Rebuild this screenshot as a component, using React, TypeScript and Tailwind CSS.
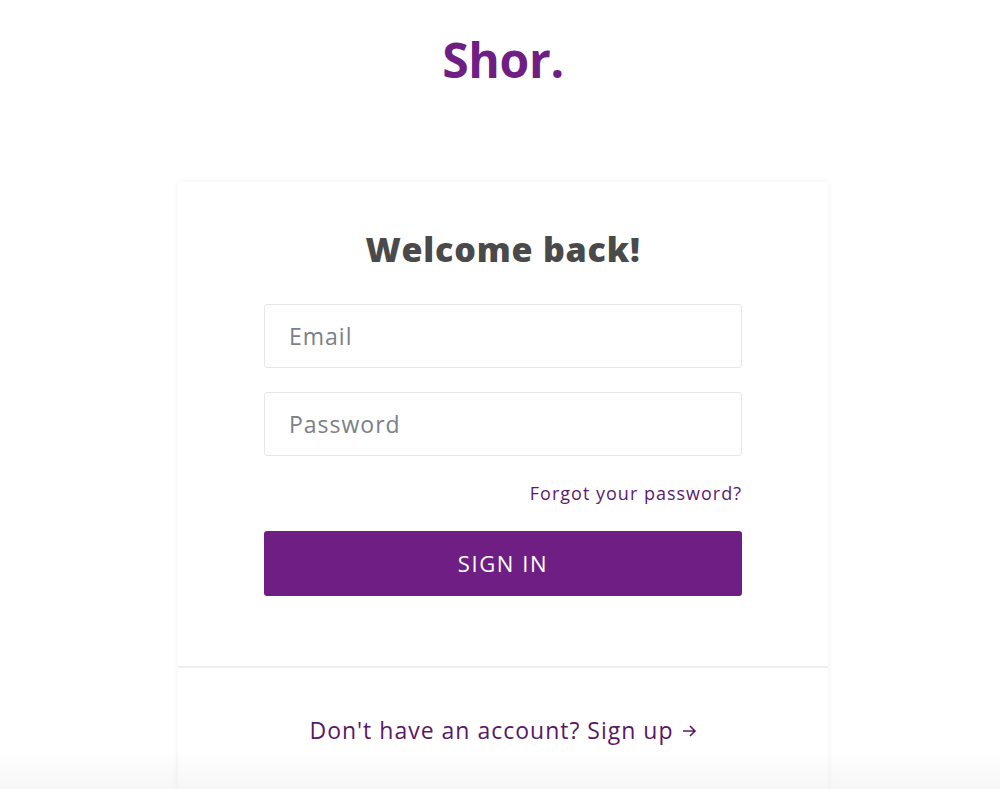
import React from 'react';

const App: React.FC = () => {
  return (
    <div
      className="relative min-h-[789px] overflow-hidden bg-white flex flex-col items-center pl-[6px]"
      style={{ fontFamily: '"Open Sans", "Liberation Sans", sans-serif' }}
    >
      <h1 className="mt-[26px] text-[48px] leading-[68px] font-bold text-[#6f1f84] tracking-[-0.3px]">
        Shor.
      </h1>

      <div className="mt-[88px] w-[650px] bg-white shadow-[0_0_7px_rgba(0,0,0,0.06)]">
        <div className="px-[86px] pt-[44px] pb-[70px]">
          <h2 className="text-center text-[34px] leading-[46px] font-extrabold text-[#4a4a4a] tracking-[0.8px]">
            Welcome back!
          </h2>

          <div className="mt-[32px] flex flex-col gap-[24px]">
            <input
              type="email"
              placeholder="Email"
              className="h-[64px] w-full rounded-[3px] border border-[#e6e6e6] px-[24px] text-[23px] tracking-[1px] text-[#333] placeholder:text-[#7b8087] outline-none"
            />
            <input
              type="password"
              placeholder="Password"
              className="h-[64px] w-full rounded-[3px] border border-[#e6e6e6] px-[24px] text-[23px] tracking-[1px] text-[#333] placeholder:text-[#7b8087] outline-none"
            />
          </div>

          <div className="mt-[24px] flex justify-end">
            <a href="#" className="text-[18px] leading-[26px] tracking-[1px] text-[#5c1a6f]">
              Forgot your password?
            </a>
          </div>

          <button className="mt-[25px] h-[65px] w-full rounded-[3px] bg-[#6f1f84] text-[22px] font-medium text-white tracking-[1.6px]">
            SIGN IN
          </button>
        </div>

        <div className="border-t-2 border-[#eeeeee] pt-[46px] pb-[44px] text-center">
          <a href="#" className="inline-flex items-center gap-[8px] text-[23px] leading-[32px] tracking-[1px] text-[#5a1868]">
            Don't have an account? Sign up
            <svg width="15" height="14" viewBox="0 0 15 14" fill="none" stroke="currentColor" strokeWidth="1.6" className="mt-[2px]">
              <path d="M1 7h12M8 2l5 5-5 5" />
            </svg>
          </a>
        </div>
      </div>

      <div className="pointer-events-none absolute inset-x-0 bottom-0 h-[40px] bg-gradient-to-b from-transparent to-[rgba(0,0,0,0.035)]" />
    </div>
  );
};

export default App;
